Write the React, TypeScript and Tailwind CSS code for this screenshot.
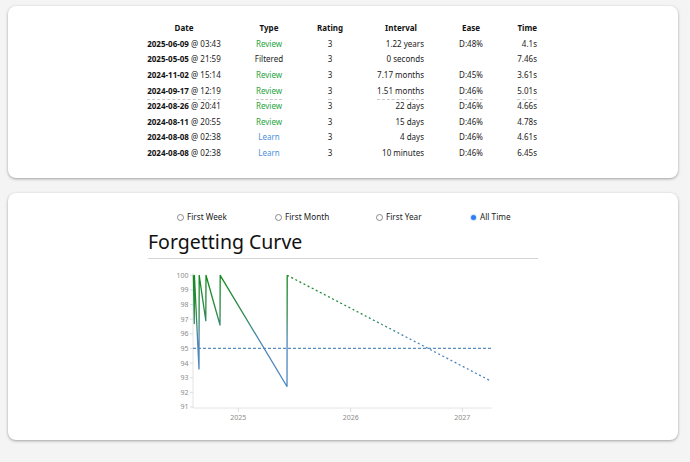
import React from "react";

const rows = [
  { d: "2025-06-09", t: "03:43", type: "Review", r: "3", iv: "1.22 years", ease: "D:48%", time: "4.1s" },
  { d: "2025-05-05", t: "21:59", type: "Filtered", r: "3", iv: "0 seconds", ease: "", time: "7.46s" },
  { d: "2024-11-02", t: "15:14", type: "Review", r: "3", iv: "7.17 months", ease: "D:45%", time: "3.61s" },
  { d: "2024-09-17", t: "12:19", type: "Review", r: "3", iv: "1.51 months", ease: "D:46%", time: "5.01s", sep: true },
  { d: "2024-08-26", t: "20:41", type: "Review", r: "3", iv: "22 days", ease: "D:46%", time: "4.66s" },
  { d: "2024-08-11", t: "20:55", type: "Review", r: "3", iv: "15 days", ease: "D:46%", time: "4.78s" },
  { d: "2024-08-08", t: "02:38", type: "Learn", r: "3", iv: "4 days", ease: "D:46%", time: "4.61s" },
  { d: "2024-08-08", t: "02:38", type: "Learn", r: "3", iv: "10 minutes", ease: "D:46%", time: "6.45s" },
];

function typeColor(t: string) {
  if (t === "Review") return "text-[#27a340]";
  if (t === "Learn") return "text-[#4a8fe0]";
  return "text-[#222]";
}

function Sep({ on, children }: { on?: boolean; children: React.ReactNode }) {
  return (
    <span className={on ? "border-b border-dashed border-[#c8c8c8] pb-[3px]" : ""}>{children}</span>
  );
}

function Radio({ label, checked }: { label: string; checked?: boolean }) {
  return (
    <div className="flex items-center gap-[3px]">
      {checked ? (
        <span className="w-[7px] h-[7px] rounded-full bg-[#d6e6fd] flex items-center justify-center">
          <span className="w-[5px] h-[5px] rounded-full bg-[#2f7cf6]" />
        </span>
      ) : (
        <span className="w-[7px] h-[7px] rounded-full border border-[#8a8a8a] bg-white" />
      )}
      <span className="text-[8.2px] text-[#222]">{label}</span>
    </div>
  );
}

const y = (v: number) => 275.3 + (100 - v) * 14.63;

function Chart() {
  const solid = [
    [193.4, 100],
    [194.3, 96.7],
    [194.4, 100],
    [199, 93.6],
    [199.2, 100],
    [205.8, 96.9],
    [206, 100],
    [220, 96.6],
    [220.2, 100],
    [287, 92.4],
    [287.2, 100],
  ];
  const d = solid.map((p, i) => `${i ? "L" : "M"}${p[0]},${y(p[1]).toFixed(2)}`).join(" ");
  const ticks = [100, 99, 98, 97, 96, 95, 94, 93, 92, 91];
  const years = [
    [238.3, "2025"],
    [350.7, "2026"],
    [462.3, "2027"],
  ] as const;
  return (
    <svg width={390} height={165} viewBox="148 265 390 165" className="block">
      <defs>
        <linearGradient id="g" gradientUnits="userSpaceOnUse" x1="0" y1={y(100)} x2="0" y2={y(92)}>
          <stop offset="0" stopColor="#128a1e" />
          <stop offset="0.33" stopColor="#2e8a4a" />
          <stop offset="0.55" stopColor="#4a86b8" />
          <stop offset="1" stopColor="#4a86c4" />
        </linearGradient>
      </defs>
      <line x1={193} y1={273} x2={193} y2={408} stroke="#e4e4e4" strokeWidth={1} />
      <line x1={193} y1={408} x2={492} y2={408} stroke="#e4e4e4" strokeWidth={1} />
      {ticks.map((t) => (
        <g key={t}>
          <line x1={190} y1={y(t)} x2={193} y2={y(t)} stroke="#dcdcdc" />
          <text x={188.5} y={y(t) + 2.5} fontSize={7} fill="#8c8c8c" textAnchor="end" fontFamily="'Noto Sans', sans-serif">
            {t}
          </text>
        </g>
      ))}
      {years.map(([x, l]) => (
        <g key={l}>
          <line x1={x} y1={408} x2={x} y2={412} stroke="#dcdcdc" />
          <text x={x} y={419.5} fontSize={7} fill="#8c8c8c" textAnchor="middle" fontFamily="'Noto Sans', sans-serif">
            {l}
          </text>
        </g>
      ))}
      <line x1={193} y1={y(95)} x2={492} y2={y(95)} stroke="#5a8cbf" strokeWidth={1.2} strokeDasharray="3 2" />
      <path d={d} fill="none" stroke="url(#g)" strokeWidth={1.3} strokeLinejoin="round" />
      <path
        d={`M287.2,${y(100)} L490.7,${y(92.78)}`}
        fill="none"
        stroke="url(#g)"
        strokeWidth={1.3}
        strokeDasharray="2 2.6"
      />
    </svg>
  );
}

const cols = "grid grid-cols-[76px_94px_28px_82px_90px_24px]";

export default function App() {
  return (
    <div
      className="w-[690px] h-[462px] bg-[#f4f4f4] pt-[6px] px-[8px] flex flex-col gap-[15px] text-[#111]"
      style={{ fontFamily: "'Noto Sans', sans-serif" }}
    >
      <div className="w-[670px] h-[172px] bg-white rounded-[8px] shadow-[0_1px_3px_rgba(0,0,0,0.35)] pt-[14px] pl-[138px]">
        <div className="w-[394px] text-[8px] whitespace-nowrap">
          <div className={cols + " h-[16px] items-center font-bold"}>
            <div className="text-center">Date</div>
            <div className="text-center">Type</div>
            <div className="text-center">Rating</div>
            <div className="text-right pr-[9px]">Interval</div>
            <div className="text-center">Ease</div>
            <div className="text-right pr-[3px]">Time</div>
          </div>
          {rows.map((r, i) => (
            <div key={i} className={cols + " h-[15.6px] items-center text-[#222]"}>
              <div className="text-center">
                <Sep on={r.sep}>
                  <span className="font-bold text-[#111]">{r.d}</span> @ {r.t}
                </Sep>
              </div>
              <div className={"text-center " + typeColor(r.type)}>
                <Sep on={r.sep}>{r.type}</Sep>
              </div>
              <div className="text-center">
                <Sep on={r.sep}>{r.r}</Sep>
              </div>
              <div className="text-right pr-[2px]">
                <Sep on={r.sep}>{r.iv}</Sep>
              </div>
              <div className="text-center">
                <Sep on={r.sep}>{r.ease}</Sep>
              </div>
              <div className="text-right pr-[3px]">
                <Sep on={r.sep}>{r.time}</Sep>
              </div>
            </div>
          ))}
        </div>
      </div>
      <div className="w-[670px] h-[247px] bg-white rounded-[8px] shadow-[0_1px_3px_rgba(0,0,0,0.35)] pt-[19px] pl-[140px]">
        <div className="flex pl-[29px] h-[10px] items-center">
          <div className="w-[98px]"><Radio label="First Week" /></div>
          <div className="w-[101px]"><Radio label="First Month" /></div>
          <div className="w-[94px]"><Radio label="First Year" /></div>
          <div><Radio label="All Time" checked /></div>
        </div>
        <div className="w-[390px] mt-[7px] border-b border-[#d4d4d4] pb-[3px]">
          <div className="text-[19.5px] leading-[26px] text-[#111]">Forgetting Curve</div>
        </div>
        <div className="w-[390px] mt-[6px]">
          <Chart />
        </div>
      </div>
    </div>
  );
}
